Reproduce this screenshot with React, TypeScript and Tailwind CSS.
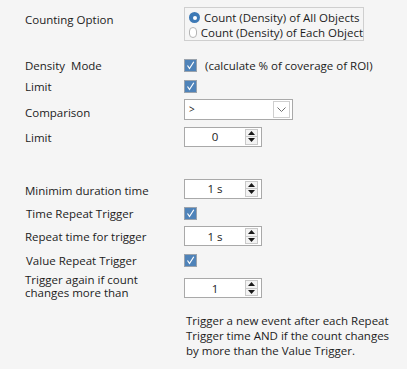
import React from "react";

function Check() {
  return (
    <div className="w-[13px] h-[13px] border border-[#9aa3ad] bg-[#4f83b9] flex items-center justify-center">
      <svg width="9" height="9" viewBox="0 0 9 9">
        <path d="M1.5 4.5 L3.5 7.5 L7.8 0.8" stroke="#ffffff" strokeWidth="1.2" fill="none" />
      </svg>
    </div>
  );
}

function Radio({ on }: { on?: boolean }) {
  return on ? (
    <div className="w-[11px] h-[11px] rounded-full bg-[#3d79b5] flex items-center justify-center">
      <div className="w-[4px] h-[4px] rounded-full bg-white" />
    </div>
  ) : (
    <div className="w-[11px] h-[11px] rounded-full border border-[#b4b4b4] bg-white" />
  );
}

function Spin({ value }: { value: string }) {
  return (
    <div className="w-[78px] h-[20px] border border-[#a9a9a9] bg-white flex items-center">
      <div className="flex-1 text-center">{value}</div>
      <div className="w-[13px] h-[16px] mr-[3px] border border-[#c9c9c9] bg-[#f3f3f3] flex flex-col">
        <div className="flex-1 flex items-center justify-center border-b border-[#c9c9c9]">
          <svg width="7" height="4" viewBox="0 0 7 4"><path d="M0 4 L3.5 0 L7 4Z" fill="#1a1a1a" /></svg>
        </div>
        <div className="flex-1 flex items-center justify-center">
          <svg width="7" height="4" viewBox="0 0 7 4"><path d="M0 0 L3.5 4 L7 0Z" fill="#1a1a1a" /></svg>
        </div>
      </div>
    </div>
  );
}

export default function App() {
  return (
    <div
      className="w-[407px] h-[369px] bg-[#f5f5f5] text-[#1c1c1c] text-[11.5px] leading-[15px] pl-[25px] pt-[7px] whitespace-nowrap"
      style={{ fontFamily: '"Segoe UI", "Open Sans", sans-serif' }}
    >
      {/* Counting option */}
      <div className="flex h-[34px]">
        <div className="w-[159px] pt-[5px]">Counting Option</div>
        <div className="w-[180px] border border-[#cfcfcf] pl-[4px] pt-[2px]">
          <div className="flex items-center gap-[4px] h-[15px]">
            <Radio on />
            <span>Count (Density) of All Objects</span>
          </div>
          <div className="flex items-center gap-[4px] h-[15px]">
            <Radio />
            <span>Count (Density) of Each Object</span>
          </div>
        </div>
      </div>

      <div className="flex items-center h-[14px] mt-[17px]">
        <div className="w-[159px]">Density&nbsp; Mode</div>
        <Check />
        <span className="ml-[8px]">(calculate % of coverage of ROI)</span>
      </div>

      <div className="flex items-center h-[14px] mt-[7px]">
        <div className="w-[159px]">Limit</div>
        <Check />
      </div>

      <div className="flex items-start h-[21px] mt-[6px]">
        <div className="w-[159px] pt-[6px]">Comparison</div>
        <div className="w-[109px] h-[21px] border border-[#a9a9a9] bg-white flex items-center">
          <span className="flex-1 pl-[4px] text-[10px]">&gt;</span>
          <div className="w-[17px] h-[17px] mr-[2px] border border-[#cfcfcf] bg-white flex items-center justify-center">
            <svg width="9" height="5" viewBox="0 0 9 5"><path d="M0.5 0.5 L4.5 4.5 L8.5 0.5" stroke="#6e6e6e" fill="none" /></svg>
          </div>
        </div>
      </div>

      <div className="flex items-center h-[21px] mt-[6px]">
        <div className="w-[159px] pt-[1px]">Limit</div>
        <Spin value="0" />
      </div>

      <div className="flex items-center h-[21px] mt-[31px]">
        <div className="w-[159px] pt-[3px]">Minimim duration time</div>
        <Spin value="1 s" />
      </div>

      <div className="flex items-center h-[12px] mt-[8px]">
        <div className="w-[159px] pl-[1px]">Time Repeat Trigger</div>
        <Check />
      </div>

      <div className="flex items-center h-[20px] mt-[7px]">
        <div className="w-[159px] pt-[1px]">Repeat time for trigger</div>
        <Spin value="1 s" />
      </div>

      <div className="flex items-center h-[12px] mt-[8px]">
        <div className="w-[159px] pl-[1px]">Value Repeat Trigger</div>
        <Check />
      </div>

      <div className="flex items-start mt-[7px]">
        <div className="w-[159px] leading-[13px]">
          Trigger again if count
          <br />
          changes more than
        </div>
        <div className="mt-[5px]">
          <Spin value="1" />
        </div>
      </div>

      <div className="ml-[161px] mt-[14px] leading-[15px]">
        Trigger a new event after each Repeat
        <br />
        Trigger time AND if the count changes
        <br />
        by more than the Value Trigger.
      </div>
    </div>
  );
}
